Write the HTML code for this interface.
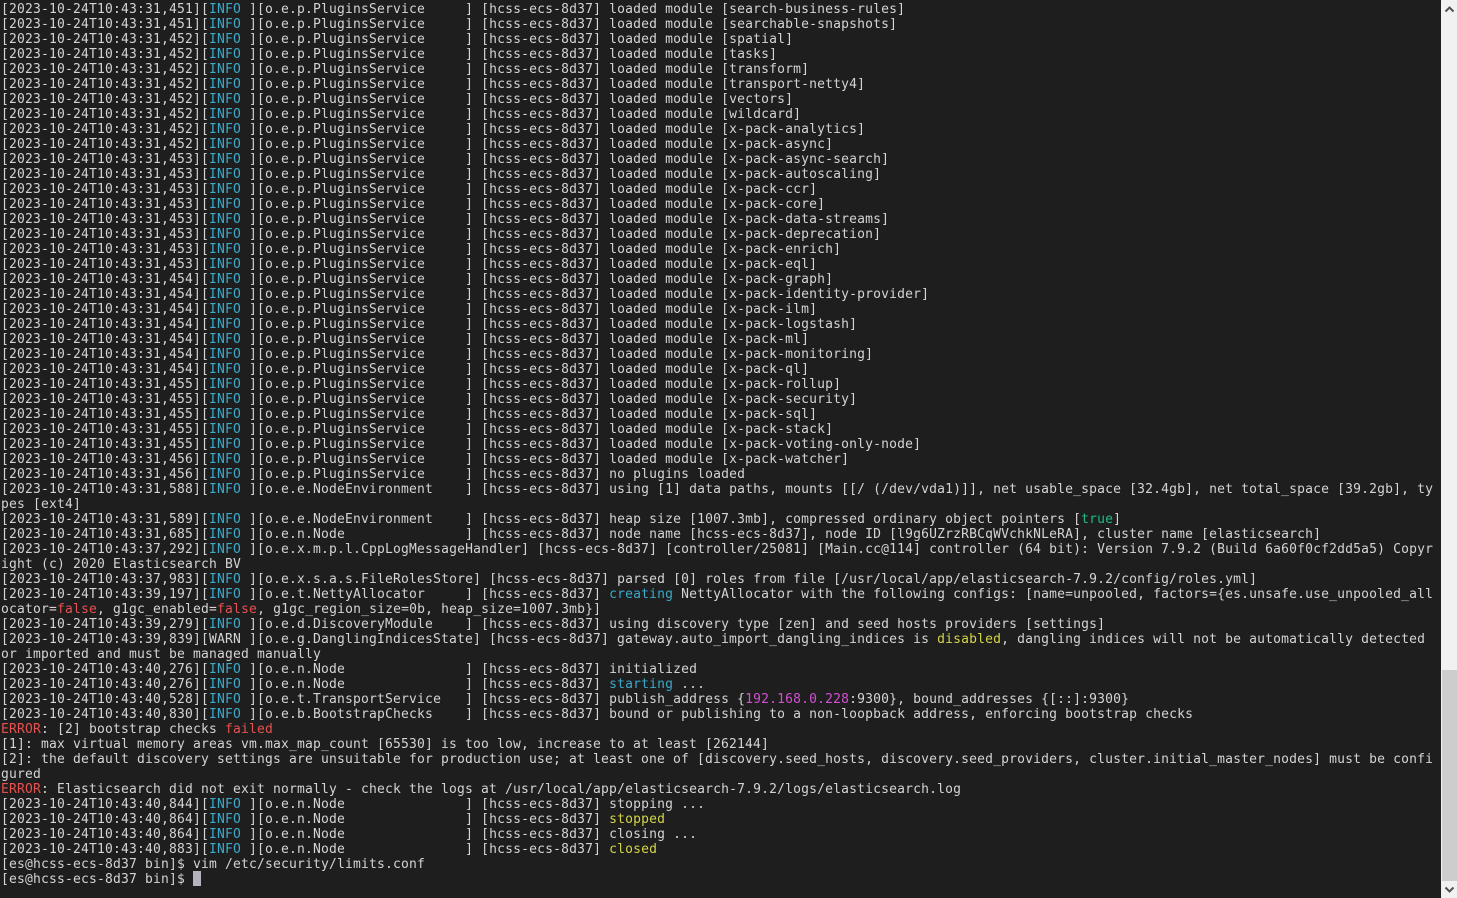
<!DOCTYPE html>
<html><head><meta charset="utf-8"><title>Terminal</title>
<style>
html,body{margin:0;padding:0;width:1457px;height:898px;overflow:hidden;background:#1e1e1e}
#t{position:absolute;left:1px;top:2px;width:1440px;height:896px;overflow:hidden;color:#d4d4d4;font-family:"DejaVu Sans Mono",monospace;font-size:13px;letter-spacing:.174px;line-height:15px}
#t div{height:15px;white-space:pre}
i{font-style:normal}
.c{color:#3ba9c9}.r{color:#e8504f}.y{color:#d4d44a}.g{color:#1fb98a}.m{color:#d24fd2}
#cur{position:absolute;left:193px;top:871px;width:8px;height:15px;background:#b4b4be}
#sb{position:absolute;left:1441px;top:0;width:16px;height:898px;background:#f1f1f1}
#th{position:absolute;left:1px;top:670px;width:15px;height:211px;background:#cdcdcd}
#sb svg{position:absolute;left:0}
</style></head><body>
<div id="t"><div>[2023-10-24T10:43:31,451][<i class="c">INFO</i> ][o.e.p.PluginsService     ] [hcss-ecs-8d37] loaded module [search-business-rules]</div><div>[2023-10-24T10:43:31,451][<i class="c">INFO</i> ][o.e.p.PluginsService     ] [hcss-ecs-8d37] loaded module [searchable-snapshots]</div><div>[2023-10-24T10:43:31,452][<i class="c">INFO</i> ][o.e.p.PluginsService     ] [hcss-ecs-8d37] loaded module [spatial]</div><div>[2023-10-24T10:43:31,452][<i class="c">INFO</i> ][o.e.p.PluginsService     ] [hcss-ecs-8d37] loaded module [tasks]</div><div>[2023-10-24T10:43:31,452][<i class="c">INFO</i> ][o.e.p.PluginsService     ] [hcss-ecs-8d37] loaded module [transform]</div><div>[2023-10-24T10:43:31,452][<i class="c">INFO</i> ][o.e.p.PluginsService     ] [hcss-ecs-8d37] loaded module [transport-netty4]</div><div>[2023-10-24T10:43:31,452][<i class="c">INFO</i> ][o.e.p.PluginsService     ] [hcss-ecs-8d37] loaded module [vectors]</div><div>[2023-10-24T10:43:31,452][<i class="c">INFO</i> ][o.e.p.PluginsService     ] [hcss-ecs-8d37] loaded module [wildcard]</div><div>[2023-10-24T10:43:31,452][<i class="c">INFO</i> ][o.e.p.PluginsService     ] [hcss-ecs-8d37] loaded module [x-pack-analytics]</div><div>[2023-10-24T10:43:31,452][<i class="c">INFO</i> ][o.e.p.PluginsService     ] [hcss-ecs-8d37] loaded module [x-pack-async]</div><div>[2023-10-24T10:43:31,453][<i class="c">INFO</i> ][o.e.p.PluginsService     ] [hcss-ecs-8d37] loaded module [x-pack-async-search]</div><div>[2023-10-24T10:43:31,453][<i class="c">INFO</i> ][o.e.p.PluginsService     ] [hcss-ecs-8d37] loaded module [x-pack-autoscaling]</div><div>[2023-10-24T10:43:31,453][<i class="c">INFO</i> ][o.e.p.PluginsService     ] [hcss-ecs-8d37] loaded module [x-pack-ccr]</div><div>[2023-10-24T10:43:31,453][<i class="c">INFO</i> ][o.e.p.PluginsService     ] [hcss-ecs-8d37] loaded module [x-pack-core]</div><div>[2023-10-24T10:43:31,453][<i class="c">INFO</i> ][o.e.p.PluginsService     ] [hcss-ecs-8d37] loaded module [x-pack-data-streams]</div><div>[2023-10-24T10:43:31,453][<i class="c">INFO</i> ][o.e.p.PluginsService     ] [hcss-ecs-8d37] loaded module [x-pack-deprecation]</div><div>[2023-10-24T10:43:31,453][<i class="c">INFO</i> ][o.e.p.PluginsService     ] [hcss-ecs-8d37] loaded module [x-pack-enrich]</div><div>[2023-10-24T10:43:31,453][<i class="c">INFO</i> ][o.e.p.PluginsService     ] [hcss-ecs-8d37] loaded module [x-pack-eql]</div><div>[2023-10-24T10:43:31,454][<i class="c">INFO</i> ][o.e.p.PluginsService     ] [hcss-ecs-8d37] loaded module [x-pack-graph]</div><div>[2023-10-24T10:43:31,454][<i class="c">INFO</i> ][o.e.p.PluginsService     ] [hcss-ecs-8d37] loaded module [x-pack-identity-provider]</div><div>[2023-10-24T10:43:31,454][<i class="c">INFO</i> ][o.e.p.PluginsService     ] [hcss-ecs-8d37] loaded module [x-pack-ilm]</div><div>[2023-10-24T10:43:31,454][<i class="c">INFO</i> ][o.e.p.PluginsService     ] [hcss-ecs-8d37] loaded module [x-pack-logstash]</div><div>[2023-10-24T10:43:31,454][<i class="c">INFO</i> ][o.e.p.PluginsService     ] [hcss-ecs-8d37] loaded module [x-pack-ml]</div><div>[2023-10-24T10:43:31,454][<i class="c">INFO</i> ][o.e.p.PluginsService     ] [hcss-ecs-8d37] loaded module [x-pack-monitoring]</div><div>[2023-10-24T10:43:31,454][<i class="c">INFO</i> ][o.e.p.PluginsService     ] [hcss-ecs-8d37] loaded module [x-pack-ql]</div><div>[2023-10-24T10:43:31,455][<i class="c">INFO</i> ][o.e.p.PluginsService     ] [hcss-ecs-8d37] loaded module [x-pack-rollup]</div><div>[2023-10-24T10:43:31,455][<i class="c">INFO</i> ][o.e.p.PluginsService     ] [hcss-ecs-8d37] loaded module [x-pack-security]</div><div>[2023-10-24T10:43:31,455][<i class="c">INFO</i> ][o.e.p.PluginsService     ] [hcss-ecs-8d37] loaded module [x-pack-sql]</div><div>[2023-10-24T10:43:31,455][<i class="c">INFO</i> ][o.e.p.PluginsService     ] [hcss-ecs-8d37] loaded module [x-pack-stack]</div><div>[2023-10-24T10:43:31,455][<i class="c">INFO</i> ][o.e.p.PluginsService     ] [hcss-ecs-8d37] loaded module [x-pack-voting-only-node]</div><div>[2023-10-24T10:43:31,456][<i class="c">INFO</i> ][o.e.p.PluginsService     ] [hcss-ecs-8d37] loaded module [x-pack-watcher]</div><div>[2023-10-24T10:43:31,456][<i class="c">INFO</i> ][o.e.p.PluginsService     ] [hcss-ecs-8d37] no plugins loaded</div><div>[2023-10-24T10:43:31,588][<i class="c">INFO</i> ][o.e.e.NodeEnvironment    ] [hcss-ecs-8d37] using [1] data paths, mounts [[/ (/dev/vda1)]], net usable_space [32.4gb], net total_space [39.2gb], ty</div><div>pes [ext4]</div><div>[2023-10-24T10:43:31,589][<i class="c">INFO</i> ][o.e.e.NodeEnvironment    ] [hcss-ecs-8d37] heap size [1007.3mb], compressed ordinary object pointers [<i class="g">true</i>]</div><div>[2023-10-24T10:43:31,685][<i class="c">INFO</i> ][o.e.n.Node               ] [hcss-ecs-8d37] node name [hcss-ecs-8d37], node ID [l9g6UZrzRBCqWVchkNLeRA], cluster name [elasticsearch]</div><div>[2023-10-24T10:43:37,292][<i class="c">INFO</i> ][o.e.x.m.p.l.CppLogMessageHandler] [hcss-ecs-8d37] [controller/25081] [Main.cc@114] controller (64 bit): Version 7.9.2 (Build 6a60f0cf2dd5a5) Copyr</div><div>ight (c) 2020 Elasticsearch BV</div><div>[2023-10-24T10:43:37,983][<i class="c">INFO</i> ][o.e.x.s.a.s.FileRolesStore] [hcss-ecs-8d37] parsed [0] roles from file [/usr/local/app/elasticsearch-7.9.2/config/roles.yml]</div><div>[2023-10-24T10:43:39,197][<i class="c">INFO</i> ][o.e.t.NettyAllocator     ] [hcss-ecs-8d37] <i class="c">creating</i> NettyAllocator with the following configs: [name=unpooled, factors={es.unsafe.use_unpooled_all</div><div>ocator=<i class="r">false</i>, g1gc_enabled=<i class="r">false</i>, g1gc_region_size=0b, heap_size=1007.3mb}]</div><div>[2023-10-24T10:43:39,279][<i class="c">INFO</i> ][o.e.d.DiscoveryModule    ] [hcss-ecs-8d37] using discovery type [zen] and seed hosts providers [settings]</div><div>[2023-10-24T10:43:39,839][WARN ][o.e.g.DanglingIndicesState] [hcss-ecs-8d37] gateway.auto_import_dangling_indices is <i class="y">disabled</i>, dangling indices will not be automatically detected</div><div>or imported and must be managed manually</div><div>[2023-10-24T10:43:40,276][<i class="c">INFO</i> ][o.e.n.Node               ] [hcss-ecs-8d37] initialized</div><div>[2023-10-24T10:43:40,276][<i class="c">INFO</i> ][o.e.n.Node               ] [hcss-ecs-8d37] <i class="c">starting</i> ...</div><div>[2023-10-24T10:43:40,528][<i class="c">INFO</i> ][o.e.t.TransportService   ] [hcss-ecs-8d37] publish_address {<i class="m">192.168.0.228</i>:9300}, bound_addresses {[::]:9300}</div><div>[2023-10-24T10:43:40,830][<i class="c">INFO</i> ][o.e.b.BootstrapChecks    ] [hcss-ecs-8d37] bound or publishing to a non-loopback address, enforcing bootstrap checks</div><div><i class="r">ERROR</i>: [2] bootstrap checks <i class="r">failed</i></div><div>[1]: max virtual memory areas vm.max_map_count [65530] is too low, increase to at least [262144]</div><div>[2]: the default discovery settings are unsuitable for production use; at least one of [discovery.seed_hosts, discovery.seed_providers, cluster.initial_master_nodes] must be confi</div><div>gured</div><div><i class="r">ERROR</i>: Elasticsearch did not exit normally - check the logs at /usr/local/app/elasticsearch-7.9.2/logs/elasticsearch.log</div><div>[2023-10-24T10:43:40,844][<i class="c">INFO</i> ][o.e.n.Node               ] [hcss-ecs-8d37] stopping ...</div><div>[2023-10-24T10:43:40,864][<i class="c">INFO</i> ][o.e.n.Node               ] [hcss-ecs-8d37] <i class="y">stopped</i></div><div>[2023-10-24T10:43:40,864][<i class="c">INFO</i> ][o.e.n.Node               ] [hcss-ecs-8d37] closing ...</div><div>[2023-10-24T10:43:40,883][<i class="c">INFO</i> ][o.e.n.Node               ] [hcss-ecs-8d37] <i class="y">closed</i></div><div>[es@hcss-ecs-8d37 bin]$ vim /etc/security/limits.conf</div><div>[es@hcss-ecs-8d37 bin]$ </div></div>
<div id="cur"></div>
<div id="sb">
<svg style="top:5px" width="16" height="8" viewBox="0 0 16 8"><path d="M4.5 6.5 L8.5 2.5 L12.5 6.5" fill="none" stroke="#505050" stroke-width="2"/></svg>
<div id="th"></div>
<svg style="top:886px" width="16" height="8" viewBox="0 0 16 8"><path d="M4.5 1.5 L8.5 5.5 L12.5 1.5" fill="none" stroke="#505050" stroke-width="2"/></svg>
</div>
</body></html>
